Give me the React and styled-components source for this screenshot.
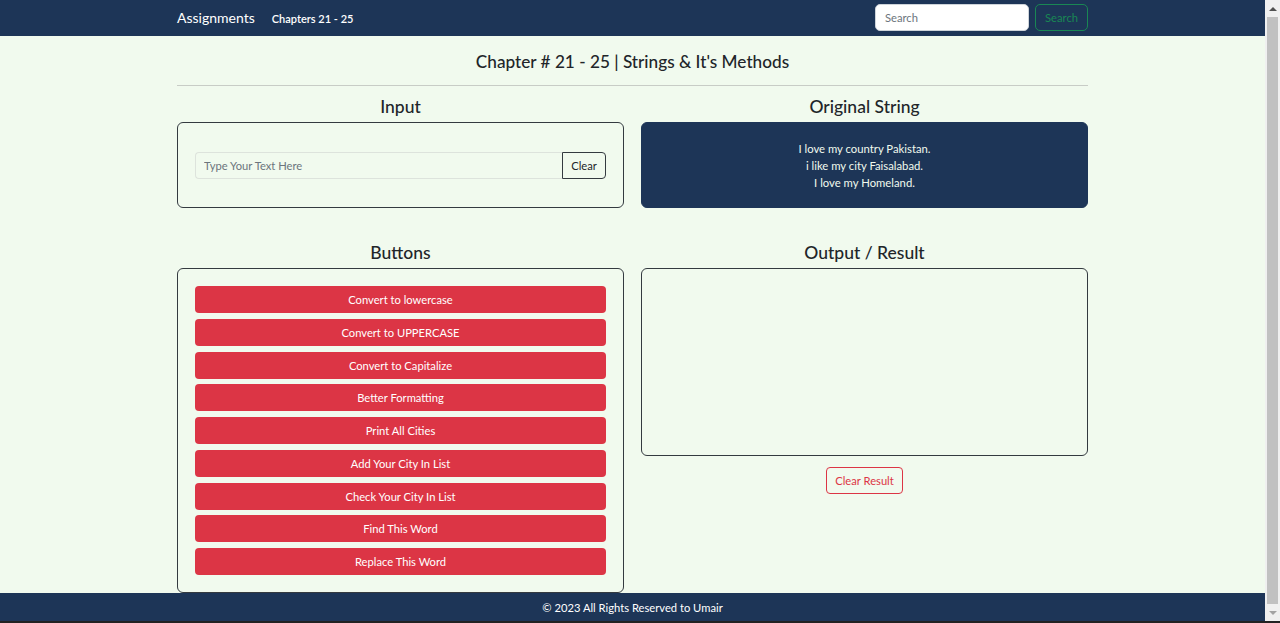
import React from "react";
import styled, { createGlobalStyle } from "styled-components";

const GlobalStyle = createGlobalStyle`
  body {
    margin: 0;
    background: #f1faee;
    font-family: Lato, "Noto Sans", sans-serif;
    color: #212529;
  }
  * { box-sizing: border-box; }
`;

const Page = styled.div`
  margin-right: 15px;
`;

const ScrollBar = styled.div`
  position: fixed;
  top: 0;
  right: 0;
  bottom: 0;
  width: 15px;
  background: #f0f0f0;
  border-bottom: 2px solid #222;
  display: flex;
  flex-direction: column;
  align-items: center;
`;

const ScrollArrow = styled.div`
  height: 17px;
  width: 100%;
  display: flex;
  align-items: center;
  justify-content: center;
  &::before {
    content: "";
    border-left: 4px solid transparent;
    border-right: 4px solid transparent;
    ${(p) =>
      p.$down
        ? "border-top: 4px solid #a3a3a3;"
        : "border-bottom: 4px solid #505050;"}
  }
`;

const ScrollThumb = styled.div`
  flex: 1;
  width: 11px;
  background: #c1c1c1;
`;

const Navbar = styled.nav`
  height: 36px;
  background: #1d3557;
`;

const Container = styled.div`
  width: 911px;
  margin: 0 auto;
`;

const NavInner = styled(Container)`
  height: 100%;
  padding-bottom: 2px;
  display: flex;
  align-items: center;
  justify-content: space-between;
`;

const NavLeft = styled.div`
  display: flex;
  align-items: baseline;
  gap: 17px;
`;

const Brand = styled.a`
  color: #ffffff;
  font-size: 14px;
  text-decoration: none;
`;

const NavLink = styled.a`
  color: #ffffff;
  font-size: 11px;
  font-weight: 600;
  text-decoration: none;
`;

const SearchForm = styled.form`
  display: flex;
  gap: 6px;
`;

const SearchInput = styled.input`
  width: 154px;
  height: 27px;
  border: 1px solid #ced4da;
  border-radius: 5px;
  padding: 0 9px;
  font: inherit;
  font-size: 11.2px;
  color: #212529;
  background: #fff;
  &::placeholder { color: #6c757d; }
`;

const SearchButton = styled.button`
  width: 53px;
  height: 27px;
  border: 1px solid #198754;
  border-radius: 5px;
  background: transparent;
  color: #198754;
  font: inherit;
  font-size: 11.2px;
`;

const Title = styled.h1`
  margin: 0;
  padding-top: 15px;
  font-size: 17.2px;
  line-height: 22px;
  font-weight: 500;
  text-align: center;
`;

const Rule = styled.hr`
  margin: 12px 0 10px;
  border: 0;
  border-top: 1px solid #c8ccc6;
`;

const Grid = styled.div`
  display: grid;
  grid-template-columns: 447px 447px;
  column-gap: 17px;
  row-gap: 34px;
  align-items: start;
`;

const Section = styled.section`
  display: flex;
  flex-direction: column;
  align-items: stretch;
`;

const Heading = styled.h2`
  margin: 0 0 4px;
  font-size: 17.5px;
  line-height: 22px;
  font-weight: 500;
  text-align: center;
`;

const Box = styled.div`
  border: 1px solid #343a40;
  border-radius: 6px;
  height: ${(p) => p.$h}px;
  padding: 0 17px;
  background: ${(p) => (p.$dark ? "#1d3557" : "transparent")};
  border-color: ${(p) => (p.$dark ? "#1d3557" : "#343a40")};
  display: flex;
  flex-direction: column;
  justify-content: ${(p) => (p.$center ? "center" : "flex-start")};
`;

const InputGroup = styled.div`
  display: flex;
  height: 27px;
`;

const TextInput = styled.input`
  flex: 1;
  border: 1px solid #dde3dc;
  border-right: 0;
  border-radius: 4px 0 0 4px;
  background: transparent;
  padding: 0 8px;
  font: inherit;
  font-size: 11.2px;
  &::placeholder { color: #6c757d; }
`;

const ClearButton = styled.button`
  width: 44px;
  border: 1px solid #343a40;
  border-radius: 0 4px 4px 0;
  background: transparent;
  color: #212529;
  font: inherit;
  font-size: 11.2px;
`;

const OriginalText = styled.p`
  margin: 0;
  color: #f1faee;
  font-size: 11.3px;
  line-height: 17px;
  text-align: center;
`;

const ButtonList = styled.div`
  display: flex;
  flex-direction: column;
  gap: 5.75px;
  padding-top: 17px;
`;

const ActionButton = styled.button`
  height: 27px;
  border: 0;
  border-radius: 4px;
  background: #dc3545;
  color: #fff;
  font: inherit;
  font-size: 11.2px;
`;

const OutlineDanger = styled.button`
  align-self: center;
  margin-top: 11px;
  width: 77px;
  height: 27px;
  border: 1px solid #dc3545;
  border-radius: 4px;
  background: transparent;
  color: #dc3545;
  font: inherit;
  font-size: 11.2px;
`;

const Footer = styled.footer`
  height: 30px;
  background: #1d3557;
  border-bottom: 2px solid #222;
  color: #fff;
  font-size: 11.2px;
  display: flex;
  align-items: center;
  justify-content: center;
`;

const Main = styled(Container)`
  height: 557px;
`;

const actions = [
  "Convert to lowercase",
  "Convert to UPPERCASE",
  "Convert to Capitalize",
  "Better Formatting",
  "Print All Cities",
  "Add Your City In List",
  "Check Your City In List",
  "Find This Word",
  "Replace This Word",
];

export default function App() {
  return (
    <>
      <GlobalStyle />
      <Page>
        <Navbar>
          <NavInner>
            <NavLeft>
              <Brand href="#">Assignments</Brand>
              <NavLink href="#">Chapters 21 - 25</NavLink>
            </NavLeft>
            <SearchForm onSubmit={(e) => e.preventDefault()}>
              <SearchInput placeholder="Search" />
              <SearchButton type="submit">Search</SearchButton>
            </SearchForm>
          </NavInner>
        </Navbar>
        <Main>
          <Title>Chapter # 21 - 25 | Strings &amp; It's Methods</Title>
          <Rule />
          <Grid>
            <Section>
              <Heading>Input</Heading>
              <Box $h={86} $center>
                <InputGroup>
                  <TextInput placeholder="Type Your Text Here" />
                  <ClearButton>Clear</ClearButton>
                </InputGroup>
              </Box>
            </Section>
            <Section>
              <Heading>Original String</Heading>
              <Box $h={86} $center $dark>
                <OriginalText>I love my country Pakistan.</OriginalText>
                <OriginalText>i like my city Faisalabad.</OriginalText>
                <OriginalText>I love my Homeland.</OriginalText>
              </Box>
            </Section>
            <Section>
              <Heading>Buttons</Heading>
              <Box $h={325}>
                <ButtonList>
                  {actions.map((a) => (
                    <ActionButton key={a}>{a}</ActionButton>
                  ))}
                </ButtonList>
              </Box>
            </Section>
            <Section>
              <Heading>Output / Result</Heading>
              <Box $h={188} />
              <OutlineDanger>Clear Result</OutlineDanger>
            </Section>
          </Grid>
        </Main>
        <Footer>© 2023 All Rights Reserved to Umair</Footer>
      </Page>
      <ScrollBar aria-hidden="true">
        <ScrollArrow />
        <ScrollThumb />
        <ScrollArrow $down />
      </ScrollBar>
    </>
  );
}
